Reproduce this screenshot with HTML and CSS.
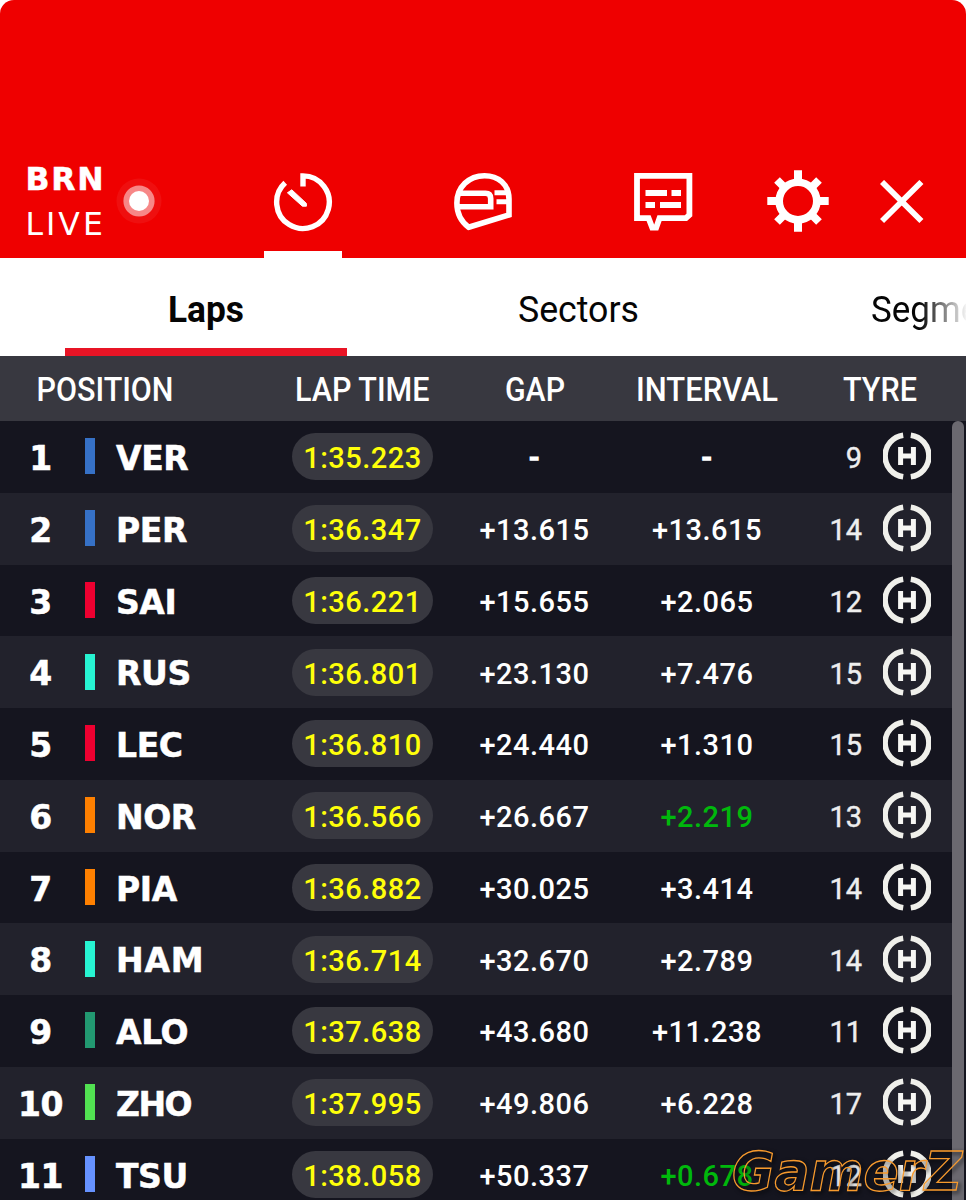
FILE: index.html
```html
<!DOCTYPE html>
<html lang="en">
<head>
<meta charset="utf-8">
<title>Live timing</title>
<link rel="stylesheet" href="styles.css">
</head>
<body>
<svg class="defs" width="0" height="0" aria-hidden="true">
  <symbol id="tyre" viewBox="0 0 48 48">
    <path d="M20.2 3.2A21 21 0 0 0 20.2 44.8M27.8 3.2A21 21 0 0 1 27.8 44.8" fill="none" stroke="#f0f0eb" stroke-width="5.6"/>
    <path d="M17.6 15V33M30.4 15V33M17.6 24H30.4" fill="none" stroke="#f7f7f4" stroke-width="5"/>
  </symbol>
</svg>
<div class="app">
  <header class="top">
    <div class="session"><b>BRN</b><span>LIVE</span></div>
    <svg class="dot" width="46" height="46" viewBox="0 0 46 46"><circle cx="23" cy="23" r="22.5" fill="#fff" opacity=".06"/><circle cx="23" cy="23" r="15.6" fill="#fff" opacity=".5"/><circle cx="23" cy="23" r="10" fill="#fff"/></svg>
    <nav class="nav">
      <a class="timer"><svg width="60" height="60" viewBox="0 0 60 60" fill="none" stroke="#fff" stroke-width="5.4"><path d="M30 14.4V3.9A26.3 26.3 0 1 1 12.2 10.8"/><path d="M18.8 17.8L33.4 31.4V34.2H29.4L14.4 20.8Z" fill="#fff" stroke-width="1"/></svg></a>
      <a class="helmet"><svg width="60" height="60" viewBox="0 0 60 60" fill="none" stroke="#fff" stroke-width="5.6"><path d="M15.6 55.2L56 43V27C56 12 45 3.7 31.5 3.7C16 3.7 3.9 15 3.9 31C3.9 41 8 49.5 15.6 55.2Z"/><path d="M7 21.2H32.5Q37.7 21.2 37.7 26.4V34.7H5"/><path d="M41.5 20.7H54M43.5 29.7H57" stroke-width="5"/></svg></a>
      <a class="chat"><svg width="60" height="60" viewBox="0 0 60 60" fill="none" stroke="#fff" stroke-width="5.8"><path d="M4 3.8H56.4V43L52.9 46.2H26.5L23.2 55.6H19.2L15.6 46.2H4Z"/><path d="M12.5 21H34M38.5 21H48M12.5 33H22M27 33H48" stroke-width="6.2"/></svg></a>
      <a class="gear"><svg width="64" height="64" viewBox="0 0 64 64" fill="none" stroke="#fff"><circle cx="32" cy="32" r="18.8" stroke-width="7.6"/><path d="M32 1.3V12M32 52V62.7M1.3 32H12M52 32H62.7M11 11L18 18M46 46L53 53M53 11L46 18M18 46L11 53" stroke-width="8"/></svg></a>
      <a class="close"><svg width="44" height="44" viewBox="0 0 44 44" stroke="#fff" stroke-width="5.8"><path d="M2 2L41.4 41M41.4 2L2 41"/></svg></a>
    </nav>
  </header>
  <div class="tabs">
    <div class="tab tab-on"><svg width="78" height="50"><text class="tl bold" x="1" y="30" textLength="76" lengthAdjust="spacingAndGlyphs">Laps</text></svg></div>
    <div class="tab tab-mid"><svg width="122" height="50"><text class="tl" x="1" y="30" textLength="121" lengthAdjust="spacingAndGlyphs">Sectors</text></svg></div>
    <div class="tab tab-last"><svg width="160" height="50"><text class="tl" x="1" y="30" textLength="157" lengthAdjust="spacingAndGlyphs">Segments</text></svg></div>
  </div>
  <div class="cols">
    <svg class="h1" width="138" height="40"><text x="-.5" y="31.5" textLength="137" lengthAdjust="spacingAndGlyphs">POSITION</text></svg>
    <svg class="h2" width="136" height="40"><text x="0" y="31.5" textLength="134.5" lengthAdjust="spacingAndGlyphs">LAP TIME</text></svg>
    <svg class="h3" width="62" height="40"><text x="0" y="31.5" textLength="60" lengthAdjust="spacingAndGlyphs">GAP</text></svg>
    <svg class="h4" width="144" height="40"><text x="-1" y="31.5" textLength="142" lengthAdjust="spacingAndGlyphs">INTERVAL</text></svg>
    <svg class="h5" width="76" height="40"><text x="-1" y="31.5" textLength="74" lengthAdjust="spacingAndGlyphs">TYRE</text></svg>
  </div>
  <main class="board">
    <div class="rows">
      <div class="row"><b class="pos">1</b><i class="team rb"></i><b class="name">VER</b><span class="pill">1:35.223</span><span class="gap dash">-</span><span class="int dash">-</span><span class="age">9</span><svg class="tyre"><use href="#tyre"/></svg></div>
      <div class="row"><b class="pos">2</b><i class="team rb"></i><b class="name">PER</b><span class="pill">1:36.347</span><span class="gap">+13.615</span><span class="int">+13.615</span><span class="age">14</span><svg class="tyre"><use href="#tyre"/></svg></div>
      <div class="row"><b class="pos">3</b><i class="team fe"></i><b class="name">SAI</b><span class="pill">1:36.221</span><span class="gap">+15.655</span><span class="int">+2.065</span><span class="age">12</span><svg class="tyre"><use href="#tyre"/></svg></div>
      <div class="row"><b class="pos">4</b><i class="team me"></i><b class="name">RUS</b><span class="pill">1:36.801</span><span class="gap">+23.130</span><span class="int">+7.476</span><span class="age">15</span><svg class="tyre"><use href="#tyre"/></svg></div>
      <div class="row"><b class="pos">5</b><i class="team fe"></i><b class="name">LEC</b><span class="pill">1:36.810</span><span class="gap">+24.440</span><span class="int">+1.310</span><span class="age">15</span><svg class="tyre"><use href="#tyre"/></svg></div>
      <div class="row"><b class="pos">6</b><i class="team mc"></i><b class="name">NOR</b><span class="pill">1:36.566</span><span class="gap">+26.667</span><span class="int close-gap">+2.219</span><span class="age">13</span><svg class="tyre"><use href="#tyre"/></svg></div>
      <div class="row"><b class="pos">7</b><i class="team mc"></i><b class="name">PIA</b><span class="pill">1:36.882</span><span class="gap">+30.025</span><span class="int">+3.414</span><span class="age">14</span><svg class="tyre"><use href="#tyre"/></svg></div>
      <div class="row"><b class="pos">8</b><i class="team me"></i><b class="name wide">HAM</b><span class="pill">1:36.714</span><span class="gap">+32.670</span><span class="int">+2.789</span><span class="age">14</span><svg class="tyre"><use href="#tyre"/></svg></div>
      <div class="row"><b class="pos">9</b><i class="team am"></i><b class="name">ALO</b><span class="pill">1:37.638</span><span class="gap">+43.680</span><span class="int">+11.238</span><span class="age">11</span><svg class="tyre"><use href="#tyre"/></svg></div>
      <div class="row"><b class="pos">10</b><i class="team ks"></i><b class="name tight">ZHO</b><span class="pill">1:37.995</span><span class="gap">+49.806</span><span class="int">+6.228</span><span class="age">17</span><svg class="tyre"><use href="#tyre"/></svg></div>
      <div class="row"><b class="pos">11</b><i class="team vr"></i><b class="name">TSU</b><span class="pill">1:38.058</span><span class="gap">+50.337</span><span class="int close-gap">+0.678</span><span class="age">12</span><svg class="tyre"><use href="#tyre"/></svg></div>
    </div>
    <div class="scroll"></div>
  </main>
  <svg class="mark" width="240" height="58"><text x="4" y="48" textLength="230" lengthAdjust="spacingAndGlyphs">GamerZ</text></svg>
</div>
</body>
</html>
```
FILE: styles.css
```css
* { box-sizing: border-box; }
body { margin: 0; background: #fff; }
.defs { position: absolute; }
.app {
  position: relative;
  width: 966px;
  height: 1200px;
  overflow: hidden;
  display: flex;
  flex-direction: column;
  font-family: Roboto, sans-serif;
}
.top {
  flex: none;
  height: 258px;
  background: #ef0000;
  border-radius: 14px 14px 0 0;
  display: flex;
  align-items: flex-end;
}
.session {
  display: flex;
  flex-direction: column;
  width: 116px;
  padding: 0 0 11px 25.5px;
  color: #fff;
  font: 31.5px/45px "DejaVu Sans", sans-serif;
}
.session b { letter-spacing: 1.8px; -webkit-text-stroke: .5px #fff; }
.session span { letter-spacing: 3px; }
.dot { margin-bottom: 34px; }
.nav { display: flex; align-items: flex-end; height: 100%; }
.nav a { display: flex; justify-content: center; }
.nav svg { display: block; }
.timer { width: 78px; margin-left: 102px; padding-bottom: 19px; border-bottom: 7px solid #fff; }
.helmet { margin-left: 111px; padding-bottom: 26px; }
.chat { margin-left: 120px; padding-bottom: 26px; }
.gear { margin-left: 73px; padding-bottom: 25px; }
.close { margin-left: 50px; padding-bottom: 34px; }

.tabs { flex: none; height: 98px; background: #fff; display: flex; overflow: hidden; }
.tab { flex: none; display: flex; justify-content: center; padding-top: 34px; }
.tab svg { overflow: visible; }
.tab-on { width: 282px; margin-left: 65px; border-bottom: 8px solid #e81425; }
.tab-mid { width: 461px; padding-left: 1px; }
.tab-last {
  width: 158px;
  justify-content: flex-start;
  margin-left: 62px;
  -webkit-mask-image: linear-gradient(90deg, #000 50px, transparent 98px);
  mask-image: linear-gradient(90deg, #000 50px, transparent 98px);
}
.tl { font-size: 37.5px; fill: #050505; }
.tl.bold { font-weight: 700; }

.cols {
  flex: none;
  height: 65px;
  background: #383840;
  display: grid;
  grid-template-columns: 37px 258px 210px 132px 207px 122px;
  align-items: center;
  fill: #fff;
  font-size: 32.5px;
  font-weight: 500;
}
.h1 { grid-column: 1; margin-left: 37px; }
.h2 { grid-column: 3; }
.h3 { grid-column: 4; }
.h4 { grid-column: 5; }
.h5 { grid-column: 6; }
.cols svg { display: block; overflow: visible; }

.board { flex: 1; min-height: 0; display: grid; grid-template-columns: 952px 14px; overflow: hidden; background: #15151f; }
.rows { min-width: 0; }
.row {
  height: 71.75px;
  display: grid;
  grid-template-columns: 81px 35px 176px 141px 203px 142px 83px 69px;
  align-items: center;
  background: #15151f;
  color: #fff;
  font-size: 29px;
  font-weight: 500;
  letter-spacing: .5px;
}
.row:nth-child(even) { background: #22222c; }
.pos, .name { font: bold 33px/40px "DejaVu Sans", sans-serif; padding-top: 4.5px; letter-spacing: -.4px; -webkit-text-stroke: .5px #fff; }
.name.wide { letter-spacing: .8px; }
.name.tight { letter-spacing: -1.5px; }
.pos { text-align: center; }
.team { width: 10px; height: 36px; margin: -1px 0 0 4px; }
.rb { background: #3671c6; }
.fe { background: #ee0030; }
.me { background: #27f4d2; }
.mc { background: #ff8000; }
.am { background: #229971; }
.ks { background: #52e252; }
.vr { background: #6692ff; }
.pill {
  height: 47px;
  border-radius: 24px;
  background: #383840;
  color: #ffff0a;
  text-align: center;
  line-height: 50px;
}
.gap, .int { text-align: center; padding-top: 3px; }
.int { width: 142px; }
.close-gap { color: #00b80c; }
.dash { -webkit-text-stroke: 1.5px #fff; }
.age { text-align: right; padding: 3px 0 0; font-weight: 400; color: #eee; letter-spacing: 0; margin-right: -1px; -webkit-text-stroke: .4px #eee; }
.tyre { width: 48px; height: 48px; margin: -1px 0 0 21.5px; }
.scroll { width: 12px; border-radius: 6px 6px 0 0; background: #6b6970; }
.mark {
  position: absolute;
  left: 728px;
  top: 1142px;
  overflow: visible;
  fill: none;
  stroke: #f79a2d;
  stroke-width: 1.3px;
  font: italic bold 54px "DejaVu Sans", sans-serif;
  filter: drop-shadow(2px 2px 2px #000);
}
```
